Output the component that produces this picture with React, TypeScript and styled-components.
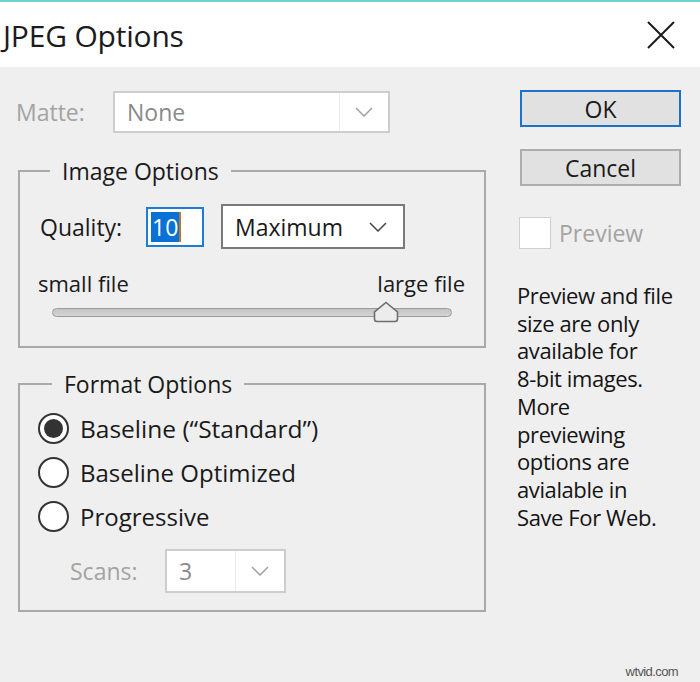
import { createGlobalStyle } from 'styled-components'
import styled from 'styled-components'

const GlobalStyle = createGlobalStyle`
  html, body {
    margin: 0;
    padding: 0;
    background: #efefef;
  }
  body {
    font-family: 'Open Sans', 'Noto Sans', sans-serif;
    color: #1a1a1a;
    width: 700px;
    height: 682px;
    overflow: hidden;
  }
`

const Dialog = styled.div`
  position: relative;
  width: 700px;
  height: 682px;
  background: #efefef;
  display: flex;
  flex-direction: column;
`

const TitleBar = styled.div`
  height: 67px;
  background: #ffffff;
  border-top: 2px solid #6fd3cc;
  display: flex;
  align-items: center;
  justify-content: space-between;
  padding: 0 25px 0 3px;
  box-sizing: border-box;
`

const Title = styled.div`
  font-size: 30px;
  color: #1b1b1b;
  margin-top: 1px;
  letter-spacing: -0.2px;
`

const CloseButton = styled.div`
  width: 28px;
  height: 28px;
  display: flex;
`

const Body = styled.div`
  display: flex;
  flex: 1;
`

const LeftColumn = styled.div`
  width: 468px;
  padding-left: 18px;
  display: flex;
  flex-direction: column;
`

const RightColumn = styled.div`
  width: 161px;
  margin-left: 34px;
  display: flex;
  flex-direction: column;
`

const Row = styled.div<{ $top?: number; $left?: number; $height?: number }>`
  display: flex;
  align-items: center;
  margin-top: ${({ $top }) => $top ?? 0}px;
  margin-left: ${({ $left }) => $left ?? 0}px;
  height: ${({ $height }) => $height ?? 44}px;
`

const Label = styled.span<{ $disabled?: boolean; $width?: number; $size?: number }>`
  font-size: ${({ $size }) => $size ?? 23}px;
  color: ${({ $disabled }) => ($disabled ? '#a3a3a3' : '#1a1a1a')};
  width: ${({ $width }) => ($width ? `${$width}px` : 'auto')};
  white-space: nowrap;
`

const Select = styled.div<{ $width: number; $height: number; $disabled?: boolean }>`
  width: ${({ $width }) => $width}px;
  height: ${({ $height }) => $height}px;
  box-sizing: border-box;
  background: #ffffff;
  border: 2px solid ${({ $disabled }) => ($disabled ? '#cdcdcd' : '#7a7a7a')};
  display: flex;
  align-items: center;
  font-size: 23px;
  color: ${({ $disabled }) => ($disabled ? '#8a8a8a' : '#1a1a1a')};
`

const SelectValue = styled.div<{ $divider?: boolean }>`
  flex: 1;
  height: 100%;
  display: flex;
  align-items: center;
  padding-left: 12px;
  box-sizing: border-box;
  border-right: ${({ $divider }) => ($divider ? '1px solid #ececec' : 'none')};
`

const SelectArrow = styled.div<{ $width: number }>`
  width: ${({ $width }) => $width}px;
  display: flex;
  align-items: center;
  justify-content: center;
`

const GroupBox = styled.fieldset<{ $top: number }>`
  margin: ${({ $top }) => $top}px 0 0 0;
  padding: 0;
  border: 2px solid #a9a9a9;
  min-width: 0;
`

const GroupLegend = styled.legend<{ $left?: number }>`
  margin-left: ${({ $left }) => $left ?? 30}px;
  padding: 0 12px;
  font-size: 23px;
  line-height: 30px;
  color: #1a1a1a;
`

const GroupContent = styled.div<{ $pad: string }>`
  padding: ${({ $pad }) => $pad};
  display: flex;
  flex-direction: column;
`

const QualityInput = styled.div`
  width: 58px;
  height: 40px;
  box-sizing: border-box;
  border: 2px solid #1a7fd4;
  background: #ffffff;
  display: flex;
  align-items: center;
  padding-left: 3px;
  margin-left: 21px;
`

const Selected = styled.span`
  background: #0a72d6;
  color: #ffffff;
  font-size: 23px;
  line-height: 30px;
  padding: 0 1px;
  border-right: 2px solid #b07a30;
`

const FileLabels = styled.div`
  display: flex;
  justify-content: space-between;
  margin-top: 19px;
  height: 30px;
  align-items: center;
  padding-right: 19px;
`

const SliderWrap = styled.div`
  position: relative;
  height: 20px;
  margin: 4px 32px 0 14px;
  display: flex;
  align-items: center;
`

const SliderTrack = styled.div`
  width: 100%;
  height: 9px;
  border-radius: 5px;
  background: linear-gradient(#c4c4c4, #d4d4d4);
  border: 1px solid #9a9a9a;
  box-sizing: border-box;
`

const SliderThumb = styled.svg`
  position: absolute;
  left: 321px;
  top: -1px;
`

const RadioRow = styled.div`
  display: flex;
  align-items: center;
  height: 44px;
  gap: 11px;
`

const RadioCircle = styled.div<{ $checked?: boolean }>`
  width: 31px;
  height: 31px;
  box-sizing: border-box;
  border-radius: 50%;
  border: 2px solid #333333;
  background: #ffffff;
  display: flex;
  align-items: center;
  justify-content: center;
  &::after {
    content: '';
    display: ${({ $checked }) => ($checked ? 'block' : 'none')};
    width: 19px;
    height: 19px;
    border-radius: 50%;
    background: #333333;
  }
`

const Button = styled.div<{ $default?: boolean; $top: number }>`
  height: 37px;
  margin-top: ${({ $top }) => $top}px;
  box-sizing: border-box;
  background: #e1e1e1;
  border: 2px solid ${({ $default }) => ($default ? '#1a73c8' : '#adadad')};
  display: flex;
  align-items: center;
  justify-content: center;
  font-size: 23px;
  color: #1a1a1a;
`

const CheckRow = styled.div`
  display: flex;
  align-items: center;
  gap: 8px;
  margin-top: 31px;
  margin-left: -1px;
`

const CheckBox = styled.div`
  width: 32px;
  height: 32px;
  box-sizing: border-box;
  border: 1px solid #cfcfcf;
  background: #ffffff;
`

const Note = styled.div`
  margin-top: 33px;
  margin-left: -3px;
  font-size: 22px;
  line-height: 27.7px;
  color: #141414;
  letter-spacing: -0.4px;
  white-space: nowrap;
`

const Watermark = styled.div`
  position: absolute;
  right: 22px;
  bottom: 3px;
  font-family: 'Liberation Sans', sans-serif;
  font-size: 13px;
  color: #555555;
  letter-spacing: -0.6px;
`

const Chevron = ({ color = '#555' }: { color?: string }) => (
  <svg width="18" height="10" viewBox="0 0 18 10">
    <path d="M1 1 L9 9 L17 1" fill="none" stroke={color} strokeWidth="1.5" />
  </svg>
)

const noteLines = [
  'Preview and file',
  'size are only',
  'available for',
  '8-bit images.',
  'More',
  'previewing',
  'options are',
  'avialable in',
  'Save For Web.',
]

export default function App() {
  return (
    <Dialog>
      <GlobalStyle />
      <TitleBar>
        <Title>JPEG Options</Title>
        <CloseButton>
          <svg width="28" height="28" viewBox="0 0 28 28">
            <path d="M1 1 L27 27 M27 1 L1 27" stroke="#1b1b1b" strokeWidth="2" />
          </svg>
        </CloseButton>
      </TitleBar>
      <Body>
        <LeftColumn>
          <Row $top={24} $height={42} $left={-2}>
            <Label $disabled $width={97}>Matte:</Label>
            <Select $width={277} $height={42} $disabled>
              <SelectValue $divider>None</SelectValue>
              <SelectArrow $width={48}>
                <Chevron color="#a0a0a0" />
              </SelectArrow>
            </Select>
          </Row>

          <GroupBox $top={23}>
            <GroupLegend>Image Options</GroupLegend>
            <GroupContent $pad="18px 0 24px 18px">
              <Row $height={45} $left={2}>
                <Label $width={85}>Quality:</Label>
                <QualityInput>
                  <Selected>10</Selected>
                </QualityInput>
                <Select $width={184} $height={45} style={{ marginLeft: 17 }}>
                  <SelectValue>Maximum</SelectValue>
                  <SelectArrow $width={50}>
                    <Chevron color="#444" />
                  </SelectArrow>
                </Select>
              </Row>
              <FileLabels>
                <Label $size={22}>small file</Label>
                <Label $size={22}>large file</Label>
              </FileLabels>
              <SliderWrap>
                <SliderTrack />
                <SliderThumb width="26" height="22" viewBox="0 0 26 22">
                  <path
                    d="M13 1.5 L24.5 11 L24.5 18 Q24.5 20.5 22 20.5 L4 20.5 Q1.5 20.5 1.5 18 L1.5 11 Z"
                    fill="#ececec"
                    stroke="#6e6e6e"
                    strokeWidth="1.6"
                  />
                </SliderThumb>
              </SliderWrap>
            </GroupContent>
          </GroupBox>

          <GroupBox $top={21}>
            <GroupLegend $left={32}>Format Options</GroupLegend>
            <GroupContent $pad="7px 0 17px 18px">
              <RadioRow>
                <RadioCircle $checked />
                <Label $size={24.5}>Baseline (“Standard”)</Label>
              </RadioRow>
              <RadioRow>
                <RadioCircle />
                <Label $size={24}>Baseline Optimized</Label>
              </RadioRow>
              <RadioRow>
                <RadioCircle />
                <Label $size={24}>Progressive</Label>
              </RadioRow>
              <Row $top={11} $left={32}>
                <Label $disabled $width={95}>Scans:</Label>
                <Select $width={121} $height={44} $disabled>
                  <SelectValue $divider>3</SelectValue>
                  <SelectArrow $width={48}>
                    <Chevron color="#a0a0a0" />
                  </SelectArrow>
                </Select>
              </Row>
            </GroupContent>
          </GroupBox>
        </LeftColumn>

        <RightColumn>
          <Button $default $top={23}>OK</Button>
          <Button $top={22}>Cancel</Button>
          <CheckRow>
            <CheckBox />
            <Label $disabled>Preview</Label>
          </CheckRow>
          <Note>
            {noteLines.map((line, i) => (
              <div key={i}>{line}</div>
            ))}
          </Note>
        </RightColumn>
      </Body>
      <Watermark>wtvid.com</Watermark>
    </Dialog>
  )
}
